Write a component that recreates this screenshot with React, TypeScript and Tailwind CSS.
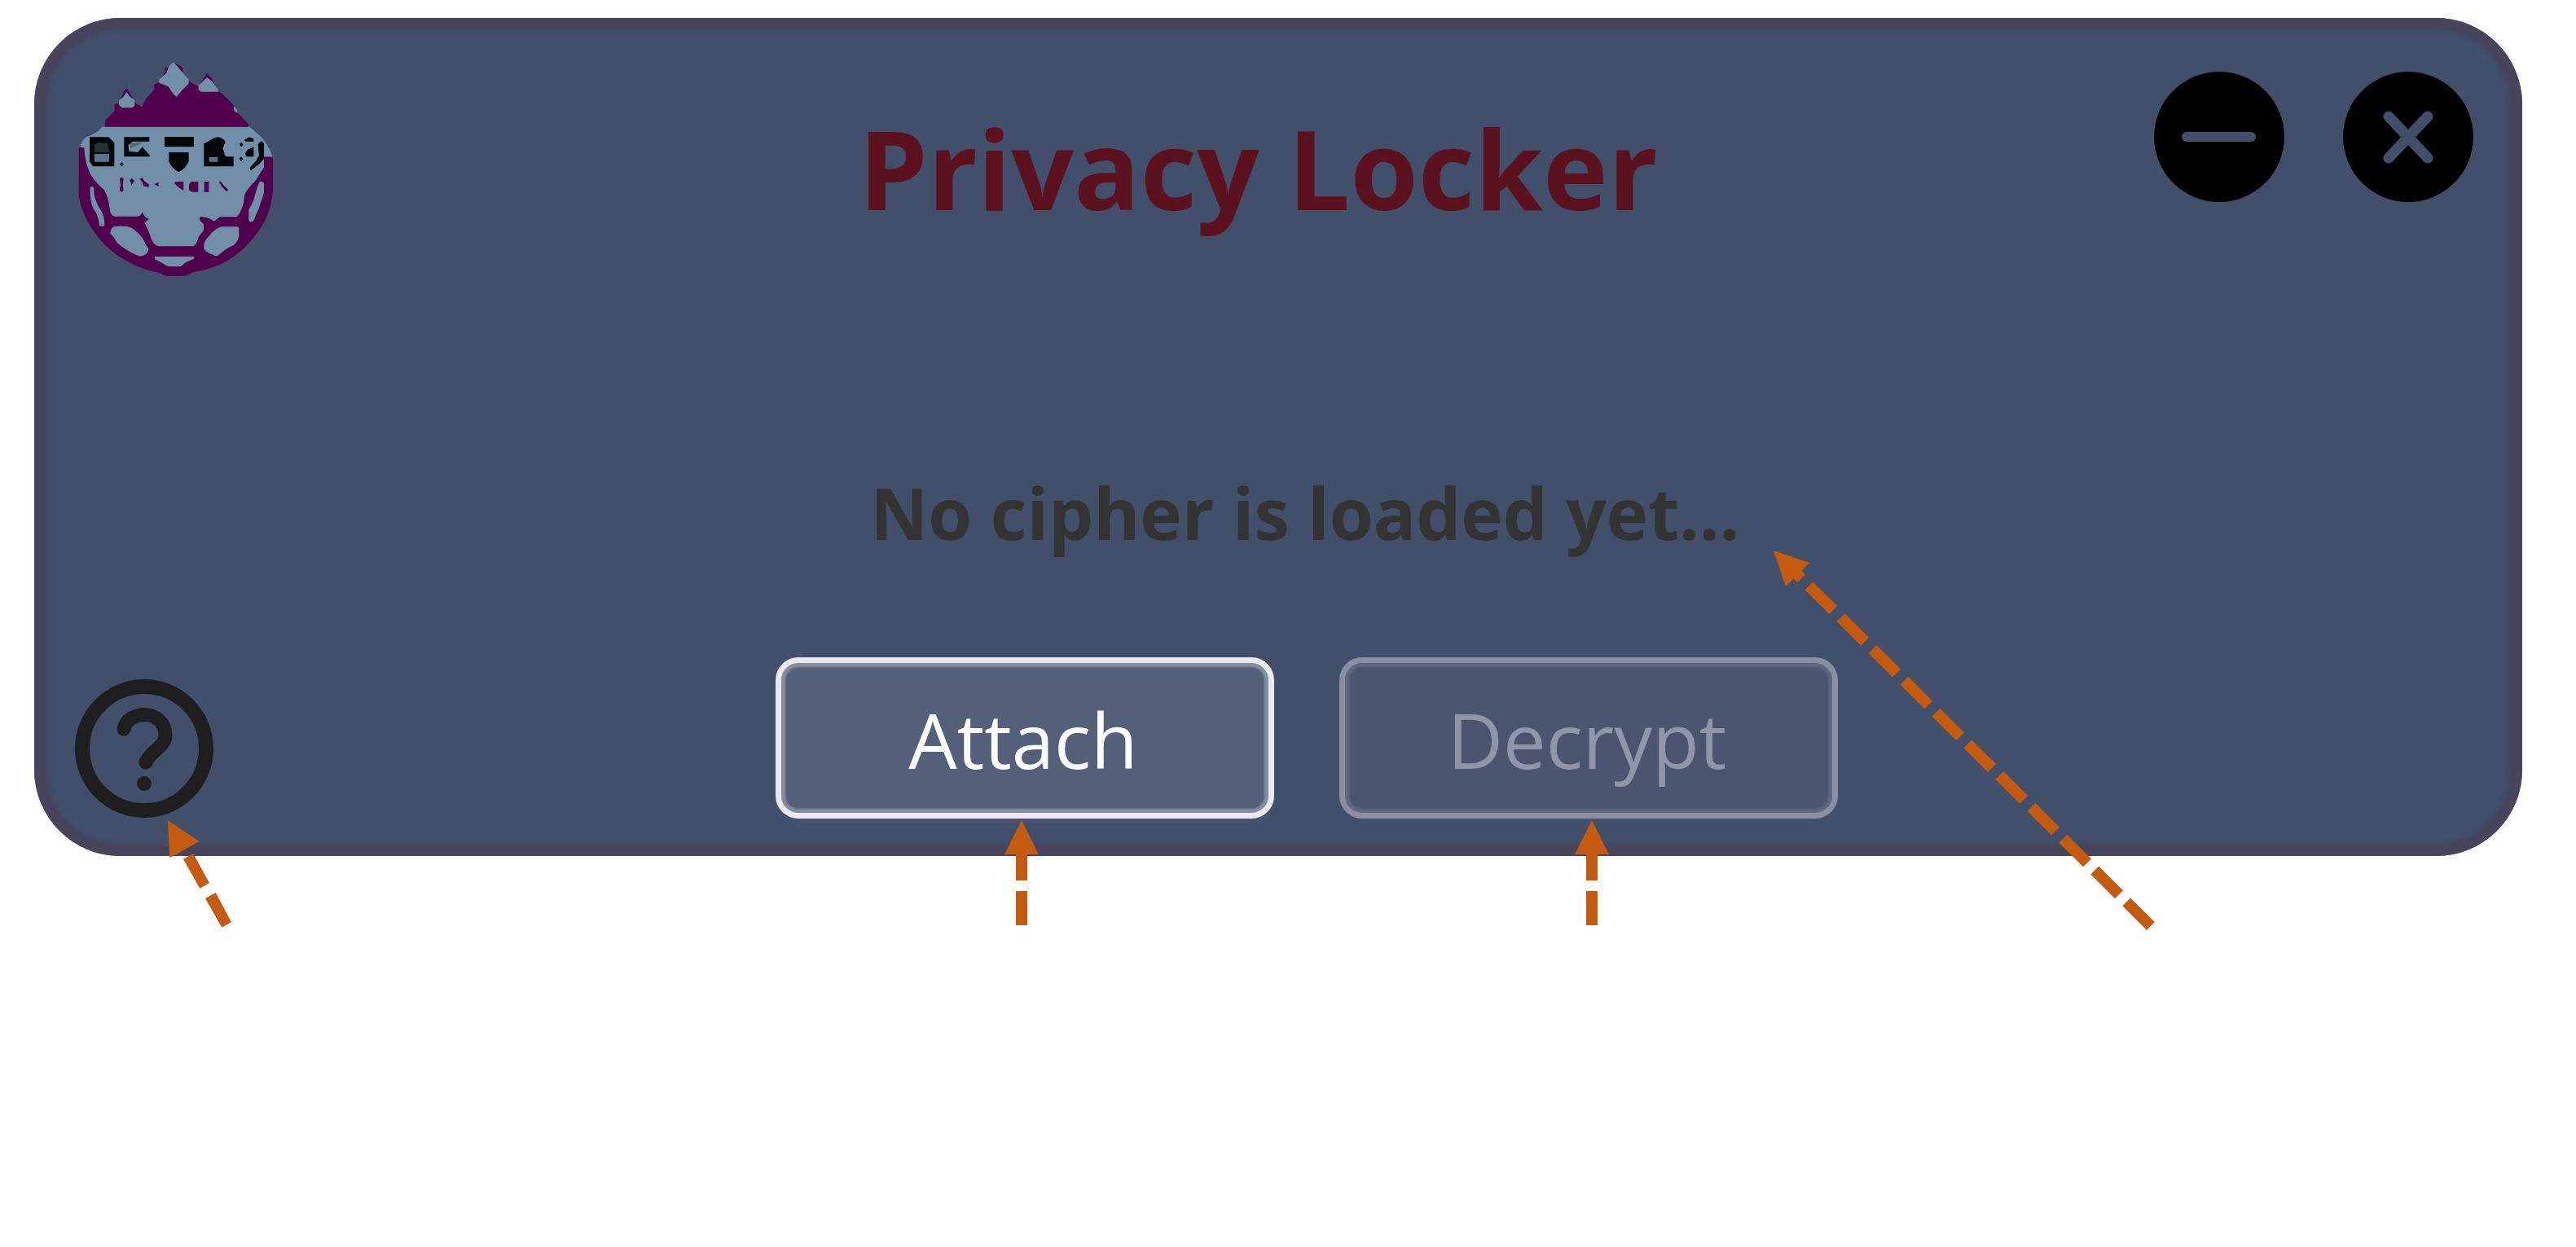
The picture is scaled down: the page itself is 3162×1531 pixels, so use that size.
import React from "react";

function Logo() {
  return (
    <svg viewBox="36 47 735 795" className="h-[265px] w-[245px] shrink-0" role="img" aria-label="Privacy Locker logo">
      <path
        fill="#51004d"
        d="M50 368 Q50 360 58 360 H73 V396 H735 Q765 394 765 404 V520 C760 590 735 645 695 692 C650 752 580 800 500 816 Q470 820 450 832 Q440 836 425 836 H380 Q360 834 348 824 C270 812 190 765 145 720 C100 672 62 610 50 545 Z"
      />
      <path
        fill="#728fa9"
        d="M136 286 H680 L720 322 Q745 345 764 396 H732 V436 L700 485 Q665 520 660 540 Q658 590 632 618 H570 L548 634 Q525 616 497 618 Q488 626 510 645 V668 Q492 685 486 708 Q480 724 470 726 H345 Q325 720 318 700 Q300 650 292 640 L308 625 Q290 620 284 600 Q278 618 262 616 H182 Q166 612 164 590 Q160 545 143 518 Q105 485 90 455 Q73 415 70 364 L55 360 Q62 332 80 322 Q115 312 136 286 Z"
      />
      <path
        fill="#51004d"
        d="M146 286 L148 262 L182 228 V202 L198 200 L218 152 L228 145 L240 165 L256 196 L282 212 L300 180 L328 150 V130 L346 122 L368 82 L372 68 L400 52 L425 64 L434 82 L456 118 L466 124 L490 138 L514 102 L522 90 L538 105 L564 155 L575 162 L620 205 L630 230 L675 276 V286 Z"
      />
      <path
        fill="#728fa9"
        d="M398 48 L416 66 L456 112 L454 128 L432 150 L410 176 L398 165 L380 138 L346 124 L345 112 L372 88 L382 62 Z M226 158 L242 178 L256 188 V208 L246 216 H210 L198 206 V190 L214 176 Z M522 104 L542 120 L564 150 V157 H502 L491 150 V134 Z M620 210 L634 224 L632 236 L622 226 Z"
      />
      <path fill="#424f6b" d="M370 66 L398 46 L380 66 L362 92 L340 120 L328 128 Z M436 80 L466 122 L458 116 Z M258 188 L268 196 L282 208 L294 180 L272 170 Z" />
      <path fill="#51004d" d="M366 76 L372 66 L380 68 L372 86 Z M404 54 L420 58 L434 72 L430 84 L418 68 Z" />
      <g fill="#728fa9">
        <path d="M92 508 Q105 502 106 515 Q104 550 130 592 Q145 610 145 650 Q135 656 126 650 Q122 610 102 585 Q90 550 92 508 Z" />
        <path d="M716 488 Q732 486 732 495 V530 Q722 560 712 590 Q700 615 694 632 Q684 640 676 632 V590 Q694 565 698 540 Q706 510 716 488 Z" />
        <path d="M180 654 Q215 648 245 658 Q275 678 290 705 Q298 725 308 736 Q304 760 275 763 Q235 750 190 712 Q180 690 166 680 Q168 658 180 654 Z" />
        <path d="M575 654 H634 Q640 654 640 662 V690 Q636 710 620 722 Q590 735 568 756 Q555 768 542 756 Q520 750 511 735 Q508 708 530 688 Q550 662 575 654 Z" />
        <path d="M332 764 H470 Q480 766 472 774 Q445 782 432 796 Q424 801 416 801 H384 Q372 800 364 792 Q350 782 332 776 Q326 768 332 764 Z" />
      </g>
      <g fill="#030608">
        <path d="M90 324 H160 L181 344 V432 H102 L90 414 Z" />
        <path d="M217 324 H310 V340 H250 L232 354 L235 376 L268 380 L284 360 L312 392 V396 H217 Z" />
        <path d="M200 424 L208 416 L216 424 L208 432 Z" opacity="0.7" />
        <path d="M366 323 H474 V360 H366 Z" />
        <path d="M382 380 H455 V412 Q445 440 418 452 Q392 440 382 414 Z" />
        <path d="M511 432 V348 L526 340 Q545 326 565 324 Q590 332 590 345 L580 366 L592 396 H620 V432 Z" />
        <path d="M660 334 L678 324 L694 330 V340 H664 Z M672 370 L694 360 V396 H668 L662 386 Z M642 350 L650 343 L656 352 L648 360 Z M641 402 L649 396 L655 405 L648 413 Z" />
        <path d="M710 350 L722 338 L732 346 V404 L716 422 L682 448 L680 436 L704 410 L714 392 Z" />
      </g>
      <path fill="#3f4f5d" d="M108 350 L124 344 L156 346 L162 380 H108 Z M240 346 L290 342 L270 352 L238 366 Z" opacity="0.6" />
      <path fill="#728fa9" d="M108 386 H162 V415 H108 Z M530 398 H562 V415 H530 Z M586 350 L604 338 L612 370 L600 392 L586 390 Z" opacity="0.8" />
      <path
        fill="#51004d"
        d="M201 476 L208 472 L215 476 L212 500 L215 520 L208 526 L201 520 L204 500 Z M238 482 L246 476 L254 484 L250 492 L244 504 L242 492 Z M274 478 L284 474 L292 486 L310 500 L306 508 L288 504 L284 490 Z M328 498 L344 490 V506 Z M402 494 Q404 488 412 488 H436 V521 L416 508 Z M456 500 Q460 488 468 488 H490 V526 H468 Q456 522 456 514 Z M512 488 H529 V526 H512 Z M566 488 H574 L582 500 L601 518 L594 524 L578 508 Z"
      />
    </svg>
  );
}

function UpArrow({ place }: { place: string }) {
  return (
    <svg viewBox="0 0 42 129" fill="#c55a11" className={"pointer-events-none absolute top-[200px] z-10 h-[129px] w-[42px] " + place} aria-hidden="true">
      <path d="M21 0 L42 42 H28 V74 H14 V42 H0 Z M14 87 H28 V129 H14 Z" />
    </svg>
  );
}

function ActionButton({ label, disabled = false, arrow }: { label: string; disabled?: boolean; arrow: string }) {
  return (
    <div className="relative">
      <button
        type="button"
        disabled={disabled}
        className="block h-[198px] w-[612px] rounded-[28px] border-[7px] border-[#e9e9ef] bg-[#545f79] pt-1 pr-1 text-[94px] leading-none text-white shadow-[inset_0_0_2px_5px_#858da0,0_6px_4px_#4a5470] disabled:border-[#8a90a3] disabled:bg-[#4b5570] disabled:text-[#8f96a9] disabled:shadow-[inset_0_0_2px_5px_#5f6880,0_6px_4px_#454f6c]"
      >
        {label}
      </button>
      <UpArrow place={arrow} />
    </div>
  );
}

export default function App() {
  return (
    <div className="min-h-screen bg-white pt-[22px] pr-[66px] pl-[42px] font-['Open_Sans','Noto_Sans',sans-serif]">
      <main className="flex flex-col rounded-[106px] bg-[#424f6b] pt-[54px] pr-[60px] pb-[46px] pl-[50px] shadow-[inset_0_0_5px_15px_#47445c]">
        <header className="flex items-start">
          <Logo />
          <h1 className="flex-1 pt-[34px] pl-[108px] text-center text-[135px] leading-[192px] font-bold text-[#5c111e]">Privacy Locker</h1>
          <div className="flex gap-[72px] pt-3">
            <button type="button" aria-label="Minimize" className="size-40 rounded-full bg-black text-[#424f6b]">
              <svg viewBox="0 0 160 160" className="size-full" stroke="currentColor" strokeWidth="12" strokeLinecap="round" aria-hidden="true">
                <path d="M40 80 H119" />
              </svg>
            </button>
            <button type="button" aria-label="Close" className="size-40 rounded-full bg-black text-[#424f6b]">
              <svg viewBox="0 0 160 160" className="size-full" stroke="currentColor" strokeWidth="13" strokeLinecap="round" aria-hidden="true">
                <path d="M56 55 L104 106 M104 55 L56 106" />
              </svg>
            </button>
          </div>
        </header>

        <div className="flex justify-center pt-[228px] pl-[76px]">
          <p className="relative text-[87px] leading-[120px] font-bold text-[#333333]">
            No cipher is loaded yet...
            <svg viewBox="0 0 468 468" className="pointer-events-none absolute top-[107px] left-full z-10 ml-[42px] size-[468px]" aria-hidden="true">
              <path d="M0 0 L44 15 L15 44 Z" fill="#c55a11" />
              <path d="M463 461 L24 24" stroke="#c55a11" strokeWidth="14" strokeDasharray="42 13" fill="none" />
            </svg>
          </p>
        </div>

        <footer className="flex items-end pt-[118px]">
          <div className="relative">
            <button type="button" aria-label="Help" className="block size-[172px] rounded-full text-[#1e1e1e]">
              <svg viewBox="0 0 172 172" className="size-full" fill="none" stroke="currentColor" aria-hidden="true">
                <circle cx="85" cy="86" r="76" strokeWidth="18" />
                <path d="M60 62 C66 37 111 38 111 70 C111 84 93 88 87 103" strokeWidth="17" strokeLinecap="round" />
                <circle cx="85" cy="129" r="9" fill="currentColor" stroke="none" />
              </svg>
            </button>
            <svg viewBox="0 0 234 396" fill="#c55a11" className="pointer-events-none absolute top-[174px] left-[114px] z-10 h-[132px] w-[78px]" aria-hidden="true">
              <path d="M0 0 L116 78 L7 139 Z M57 143 L94 124 L153 231 L118 251 Z M138 288 L176 267 L234 375 L199 395 Z" />
            </svg>
          </div>
          <div className="flex flex-1 justify-center gap-20 pr-[92px]">
            <ActionButton label="Attach" arrow="left-[281px]" />
            <ActionButton label="Decrypt" disabled arrow="left-[289px]" />
          </div>
        </footer>
      </main>
    </div>
  );
}
